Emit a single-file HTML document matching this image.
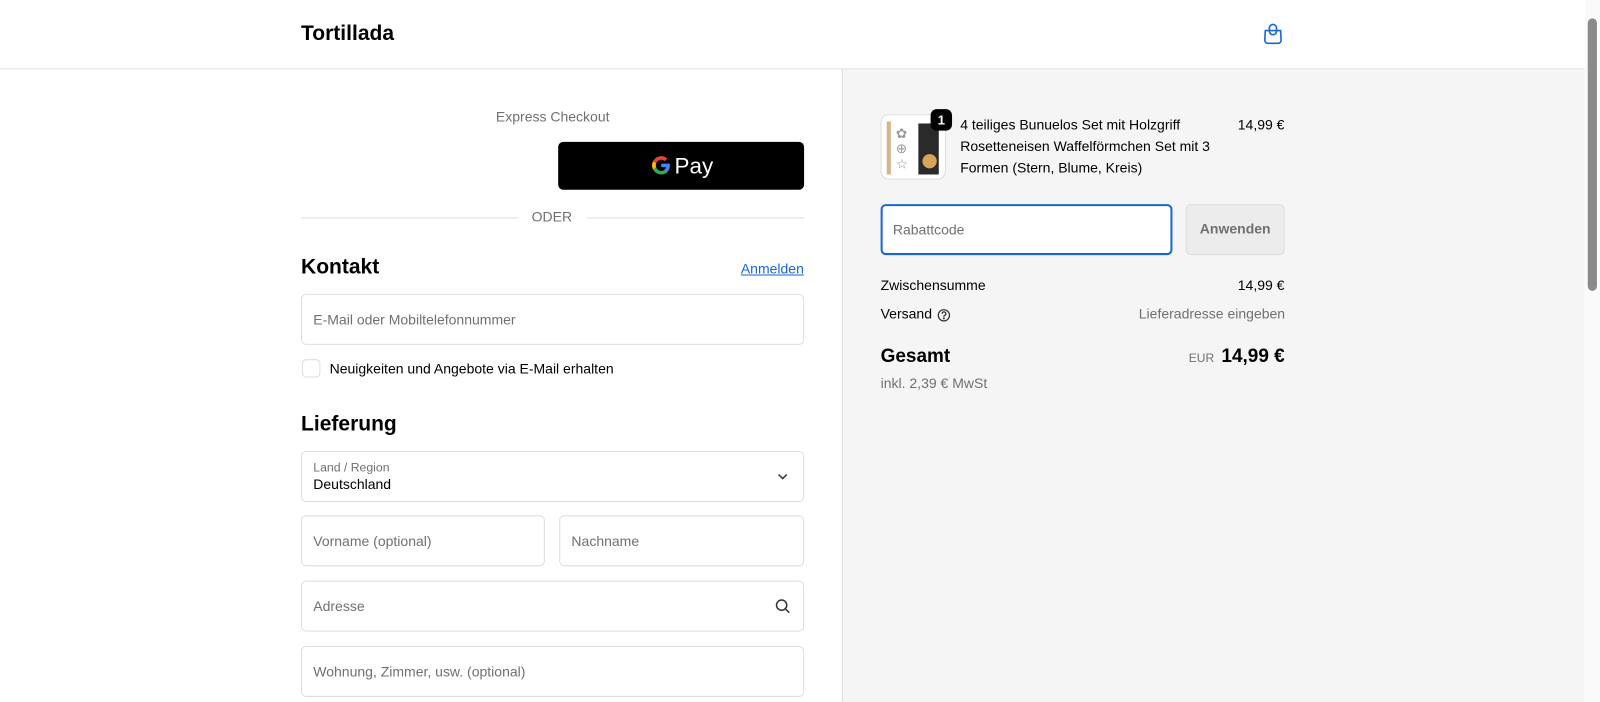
<!DOCTYPE html>
<html><head><meta charset="utf-8"><style>
*{box-sizing:border-box;margin:0;padding:0}
html,body{width:1600px;height:688px;overflow:hidden}
body{font-family:"Liberation Sans",sans-serif;color:#000;background:#fff;font-size:13.72px}
#w{position:absolute;left:0;top:0;width:1568px;height:674px;transform:scale(1.020408);transform-origin:0 0}
.hdr{position:absolute;left:0;top:0;width:1553px;height:68px;border-bottom:1px solid #dedede}
.logo{position:absolute;left:295px;top:21px;font-size:20.6px;font-weight:bold}
.right{position:absolute;left:825px;top:68px;width:728px;height:620px;background:#f5f5f5;border-left:1px solid #dedede}
.sb{position:absolute;left:1553px;top:0;width:15px;height:688px;background:#fafafa}
.sb .th{position:absolute;left:3px;top:18px;width:9px;height:267px;background:#8a8a8a;border-radius:5px}
.abs{position:absolute}
.inp{position:absolute;border:1px solid #dedede;border-radius:5px;background:#fff;color:#707070;font-size:13.72px;padding-left:11px;display:flex;align-items:center}
.h2{font-size:20.6px;font-weight:bold}
</style></head><body><div id="w">
<div class="hdr"><div class="logo">Tortillada</div>
<svg class="abs" style="left:1237px;top:22px" width="21" height="22" viewBox="0 0 21 22" fill="none" stroke="#1a66d6" stroke-width="1.6"><path d="M3 8h15l0.5 9.5a3 3 0 0 1-3 3h-10a3 3 0 0 1-3-3z"/><rect x="7" y="2" width="7" height="10" rx="3.5"/></svg>
</div>
<div class="abs" style="left:486px;top:107px;color:#707070">Express Checkout</div>
<div class="abs" style="left:547px;top:139px;width:241px;height:47px;background:#000;border-radius:5px"></div>
<svg class="abs" style="left:638px;top:152px" width="20" height="20" viewBox="0 0 20 20"><path d="M18.5 10.2c0-.7-.1-1.2-.2-1.8H10v3.4h4.8a4.2 4.2 0 0 1-1.8 2.7v2.2h2.9c1.7-1.6 2.6-3.9 2.6-6.5z" fill="#4285F4"/><path d="M10 19c2.4 0 4.4-.8 5.9-2.2L13 14.6c-.8.5-1.8.9-3 .9-2.3 0-4.3-1.6-5-3.7H2v2.3A9 9 0 0 0 10 19z" fill="#34A853"/><path d="M5 11.8a5.4 5.4 0 0 1 0-3.5V6H2a9 9 0 0 0 0 8.1z" fill="#FBBC04"/><path d="M10 4.6c1.3 0 2.5.5 3.4 1.3l2.6-2.6A9 9 0 0 0 2 6l3 2.3c.7-2.1 2.7-3.7 5-3.7z" fill="#EA4335"/></svg>
<div class="abs" style="left:661px;top:150px;color:#fff;font-size:22px">Pay</div>
<div class="abs" style="left:295px;top:213px;width:213px;height:1px;background:#dedede"></div>
<div class="abs" style="left:575px;top:213px;width:213px;height:1px;background:#dedede"></div>
<div class="abs" style="left:521px;top:205px;color:#707070">ODER</div>
<div class="abs h2" style="left:295px;top:250px">Kontakt</div>
<div class="abs" style="left:726px;top:256px;color:#1a66d6;text-decoration:underline">Anmelden</div>
<div class="inp" style="left:295px;top:288px;width:493px;height:50px">E-Mail oder Mobiltelefonnummer</div>
<div class="abs" style="left:296px;top:352px;width:18px;height:18px;border:1px solid #dedede;border-radius:4px"></div>
<div class="abs" style="left:323px;top:354px">Neuigkeiten und Angebote via E-Mail erhalten</div>
<div class="abs h2" style="left:295px;top:404px">Lieferung</div>
<div class="inp" style="left:295px;top:442px;width:493px;height:50px;display:block;padding-top:8px"><div style="font-size:12px">Land / Region</div><div style="color:#000;margin-top:2px">Deutschland</div></div>
<svg class="abs" style="left:761px;top:462px" width="12" height="10" viewBox="0 0 12 10"><path d="M2 3l4 4 4-4" fill="none" stroke="#333" stroke-width="1.5"/></svg>
<div class="inp" style="left:295px;top:505px;width:239px;height:50px">Vorname (optional)</div>
<div class="inp" style="left:548px;top:505px;width:240px;height:50px">Nachname</div>
<div class="inp" style="left:295px;top:569px;width:493px;height:50px">Adresse</div>
<svg class="abs" style="left:759px;top:586px" width="16" height="16" viewBox="0 0 16 16" fill="none" stroke="#333" stroke-width="1.5"><circle cx="7" cy="7" r="5"/><path d="M11 11l3.5 3.5"/></svg>
<div class="inp" style="left:295px;top:633px;width:493px;height:50px">Wohnung, Zimmer, usw. (optional)</div>

<div class="right"></div>
<div class="abs" style="left:863px;top:112px;width:64px;height:64px;border:1px solid #dedede;border-radius:8px;background:#fff;overflow:hidden">
<div class="abs" style="left:5px;top:6px;width:4px;height:52px;background:#d7b48a"></div>
<div class="abs" style="left:14px;top:10px;width:18px;height:46px;color:#999;font-size:13px;line-height:15px">✿<br>⊕<br>☆</div>
<div class="abs" style="left:36px;top:8px;width:20px;height:50px;background:#2a2a2a"></div>
<div class="abs" style="left:40px;top:38px;width:14px;height:14px;border-radius:50%;background:#d9a35c"></div>
</div>
<div class="abs" style="left:912px;top:107px;width:21px;height:21px;background:#000;color:#fff;border-radius:6px;font-weight:bold;font-size:13px;text-align:center;line-height:21px">1</div>
<div class="abs" style="left:941px;top:112px;width:260px;line-height:21px">4 teiliges Bunuelos Set mit Holzgriff Rosetteneisen Waffelförmchen Set mit 3 Formen (Stern, Blume, Kreis)</div>
<div class="abs" style="left:1213px;top:115px">14,99 €</div>
<div class="inp" style="left:863px;top:200px;width:286px;height:50px;border:2px solid #1a66d6;padding-left:10px">Rabattcode</div>
<div class="abs" style="left:1162px;top:200px;width:97px;height:50px;border:1px solid #dedede;border-radius:5px;background:#ececec;color:#707070;font-weight:bold;text-align:center;line-height:48px">Anwenden</div>
<div class="abs" style="left:863px;top:272px">Zwischensumme</div>
<div class="abs" style="left:1213px;top:272px">14,99 €</div>
<div class="abs" style="left:863px;top:300px">Versand</div>
<svg class="abs" style="left:918px;top:302px" width="14" height="14" viewBox="0 0 14 14" fill="none" stroke="#333" stroke-width="1.2"><circle cx="7" cy="7" r="5.5"/><path d="M5.3 5.5a1.8 1.8 0 1 1 2.3 1.7c-.4.2-.6.5-.6.9v.4"/><circle cx="7" cy="10" r=".4" fill="#333"/></svg>
<div class="abs" style="left:1116px;top:300px;color:#707070">Lieferadresse eingeben</div>
<div class="abs" style="left:863px;top:338px;font-size:18.6px;font-weight:bold">Gesamt</div>
<div class="abs" style="left:1165px;top:344px;font-size:11.8px;color:#707070">EUR</div>
<div class="abs" style="left:1197px;top:338px;font-size:18.6px;font-weight:bold">14,99 €</div>
<div class="abs" style="left:863px;top:368px;color:#707070">inkl. 2,39 € MwSt</div>
<div class="sb"><div class="th"></div></div>
</div></body></html>
